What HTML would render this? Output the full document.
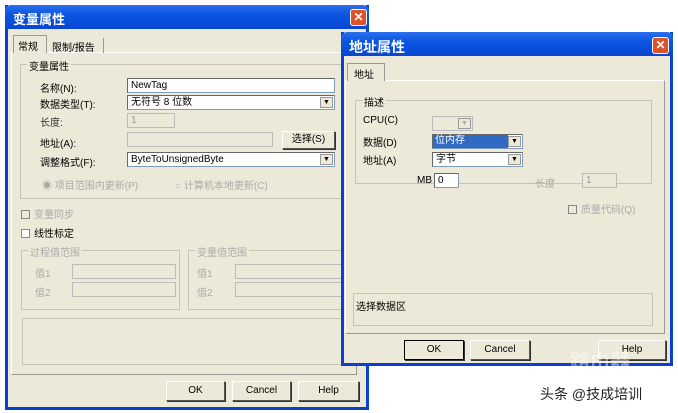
<!DOCTYPE html><html><head><meta charset="utf-8"><style>
*{box-sizing:border-box;margin:0;padding:0}
body{width:678px;height:413px;background:#fff;position:relative;overflow:hidden;font-family:"Liberation Sans","Noto Sans CJK SC",sans-serif;font-size:10px;color:#000}
.a{position:absolute}
.win{position:absolute;background:#ece9d8;border:3px solid #0a3fd0;border-top:none}
.win>*:not(.title):not(.x){margin-left:-3px}
.title{position:absolute;left:-3px;right:-3px;top:0;height:24px;background:linear-gradient(#2d6fef,#0a55e0 40%,#0846d4);color:#fff;font-weight:bold;font-size:13px;padding:4px 8px;border-radius:6px 6px 0 0}
.x{position:absolute;width:17px;height:17px;background:#d8532e;border:1px solid #fff;border-radius:3px;color:#fff;font-size:12px;line-height:15px;text-align:center;font-weight:bold}
.in{position:absolute;background:#fff;border:1px solid #7f9db9;border-top-color:#666;border-left-color:#666;font-size:10px;padding:1px 3px;height:15px;line-height:12px}
.dis{background:#ece9d8;color:#999;border-color:#bbb}
.dd{position:absolute;right:1px;top:1px;width:13px;height:11px;background:#ece9d8;border:1px solid #999;font-size:7px;text-align:center;line-height:10px}
.btn{position:absolute;background:#ece9d8;border:1px solid #fff;border-right-color:#555;border-bottom-color:#555;box-shadow:1px 1px 0 #333;text-align:center;font-size:10px;line-height:18px;height:20px}
.grp{position:absolute;border:1px solid #c8c4b4}
.gl{position:absolute;top:-7px;left:6px;background:#ece9d8;padding:0 2px}
.g{color:#aaa}
.cb{display:inline-block;width:9px;height:9px;border:1px solid #888;background:#fff;vertical-align:-1px;margin-right:4px}
</style></head><body>
<div class="win" style="left:5px;top:5px;width:364px;height:405px">
<div class="title">变量属性</div><div class="x" style="left:342px;top:4px">✕</div>
<div class="a" style="left:6px;top:47px;width:346px;height:323px;border:1px solid #999;border-left-color:#fff;border-top-color:#fff"></div>
<div class="a" style="left:8px;top:30px;width:34px;height:18px;border:1px solid #999;border-bottom:none;background:#ece9d8;padding:2px 4px">常规</div>
<div class="a" style="left:44px;top:33px;width:55px;height:15px;border-right:1px solid #999;padding:1px 3px">限制/报告</div>
<div class="grp" style="left:15px;top:59px;width:326px;height:135px"><div class="gl">变量属性</div></div>
<div class="a" style="left:35px;top:75px">名称(N):</div>
<div class="a" style="left:35px;top:91px">数据类型(T):</div>
<div class="a" style="left:35px;top:109px;color:#333">长度:</div>
<div class="a" style="left:35px;top:130px">地址(A):</div>
<div class="a" style="left:35px;top:149px">调整格式(F):</div>
<div class="in" style="left:122px;top:73px;width:208px">NewTag</div>
<div class="in" style="left:122px;top:90px;width:208px">无符号 8 位数<div class="dd">▼</div></div>
<div class="in dis" style="left:122px;top:108px;width:48px">1</div>
<div class="in dis" style="left:122px;top:127px;width:146px"></div>
<div class="btn" style="left:277px;top:126px;width:53px;height:18px;line-height:16px">选择(S)</div>
<div class="in" style="left:122px;top:147px;width:208px">ByteToUnsignedByte<div class="dd">▼</div></div>
<div class="a g" style="left:37px;top:172px">◉ 项目范围内更新(P)</div>
<div class="a g" style="left:170px;top:172px">○ 计算机本地更新(C)</div>
<div class="a g" style="left:16px;top:201px"><span class="cb" style="background:#ece9d8"></span>变量同步</div>
<div class="a" style="left:16px;top:220px"><span class="cb"></span>线性标定</div>
<div class="grp" style="left:16px;top:245px;width:159px;height:60px"><div class="gl g">过程值范围</div></div>
<div class="grp" style="left:183px;top:245px;width:167px;height:60px"><div class="gl g">变量值范围</div></div>
<div class="a g" style="left:30px;top:260px">值1</div><div class="a g" style="left:30px;top:279px">值2</div>
<div class="a g" style="left:192px;top:260px">值1</div><div class="a g" style="left:192px;top:279px">值2</div>
<div class="in dis" style="left:67px;top:259px;width:104px"></div><div class="in dis" style="left:67px;top:277px;width:104px"></div>
<div class="in dis" style="left:230px;top:259px;width:110px"></div><div class="in dis" style="left:230px;top:277px;width:110px"></div>
<div class="grp" style="left:17px;top:313px;width:333px;height:47px"></div>
<div class="btn" style="left:161px;top:376px;width:59px">OK</div>
<div class="btn" style="left:227px;top:376px;width:59px">Cancel</div>
<div class="btn" style="left:293px;top:376px;width:61px">Help</div>
</div>
<div class="win" style="left:341px;top:32px;width:332px;height:334px">
<div class="title" style="font-size:14px;padding-top:5px">地址属性</div><div class="x" style="left:308px;top:5px">✕</div>
<div class="a" style="left:4px;top:48px;width:320px;height:254px;border:1px solid #999;border-left-color:#fff;border-top-color:#fff"></div>
<div class="a" style="left:6px;top:31px;width:38px;height:18px;border:1px solid #999;border-bottom:none;background:#ece9d8;padding:2px 6px">地址</div>
<div class="grp" style="left:14px;top:68px;width:297px;height:84px"><div class="gl">描述</div></div>
<div class="a" style="left:22px;top:83px">CPU(C)</div>
<div class="a" style="left:22px;top:102px">数据(D)</div>
<div class="a" style="left:22px;top:120px">地址(A)</div>
<div class="in dis" style="left:91px;top:84px;width:41px"><div class="dd" style="color:#aaa">▼</div></div>
<div class="in" style="left:91px;top:102px;width:91px;padding:0"><span style="display:block;background:#316ac5;color:#fff;width:75px;height:13px;padding:0 2px">位内存</span><div class="dd">▼</div></div>
<div class="in" style="left:91px;top:120px;width:91px">字节<div class="dd">▼</div></div>
<div class="a" style="left:76px;top:143px">MB</div>
<div class="in" style="left:93px;top:141px;width:25px">0</div>
<div class="a g" style="left:194px;top:143px">长度</div>
<div class="in dis" style="left:241px;top:141px;width:35px">1</div>
<div class="a g" style="left:227px;top:169px"><span class="cb" style="background:#ece9d8"></span>质量代码(Q)</div>
<div class="grp" style="left:12px;top:261px;width:300px;height:33px;padding:4px 2px">选择数据区</div>
<div class="btn" style="left:63px;top:308px;width:60px;border:1px solid #000">OK</div>
<div class="btn" style="left:129px;top:308px;width:60px">Cancel</div>
<div class="btn" style="left:257px;top:308px;width:68px">Help</div>
</div>
<div class="a" style="left:540px;top:384px;font-size:14px;color:#222">头条 @技成培训</div>
<div class="a" style="left:570px;top:345px;font-size:20px;color:rgba(255,255,255,.45);font-weight:bold">路由器</div>
</body></html>
